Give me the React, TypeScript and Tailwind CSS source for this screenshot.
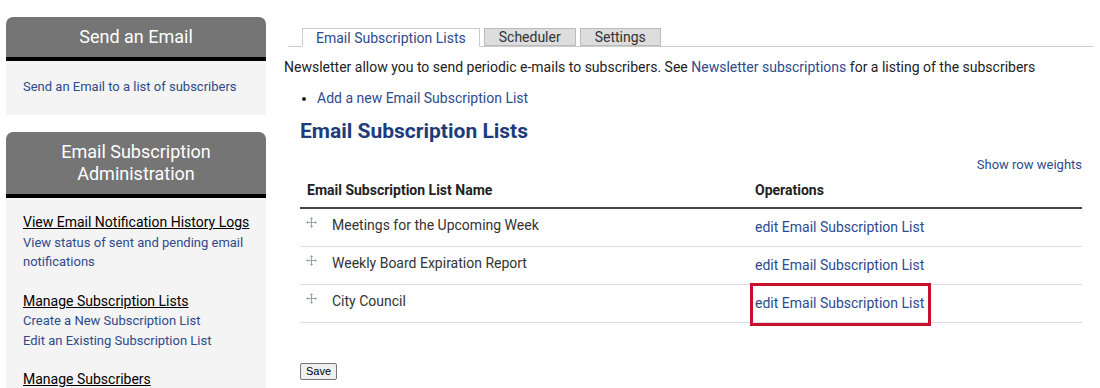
import React from 'react';

const font = { fontFamily: 'Roboto, "Liberation Sans", sans-serif' };

const DragIcon: React.FC = () => (
  <svg width="11" height="11" viewBox="0 0 11 11" className="text-gray-400">
    <path d="M5.5 1v9M1 5.5h9" stroke="currentColor" strokeWidth="1.1" />
    <path d="M5.5 0L3.9 2h3.2zM5.5 11L3.9 9h3.2zM0 5.5L2 3.9v3.2zM11 5.5L9 3.9v3.2z" fill="currentColor" />
  </svg>
);

const SideBox: React.FC<{ title: React.ReactNode; children: React.ReactNode }> = ({ title, children }) => (
  <div className="w-[260px]">
    <div className="bg-[#757575] text-white text-[18px] leading-[22px] text-center rounded-t-[7px] py-[9px] border-b-4 border-black">
      {title}
    </div>
    <div className="bg-[#f4f4f4] pl-[17px] pr-[6px]">{children}</div>
  </div>
);

const rows = ['Meetings for the Upcoming Week', 'Weekly Board Expiration Report', 'City Council'];

export default function App() {
  return (
    <div className="flex w-[1100px] h-[388px] overflow-hidden bg-white text-[14px]" style={font}>
      <aside className="pl-[6px] pt-[17px] flex flex-col gap-[17px]">
        <SideBox title="Send an Email">
          <div className="pt-[16px] pb-[19px] text-[13px] leading-[19px] text-[#2e4a8c]">
            Send an Email to a list of subscribers
          </div>
        </SideBox>
        <SideBox title={<>Email Subscription<br />Administration</>}>
          <div className="pt-[15px] text-[13px] leading-[19.5px]">
            <div className="text-[14px] text-black underline">View Email Notification History Logs</div>
            <div className="text-[#2e4a8c] pr-[14px]">View status of sent and pending email notifications</div>
            <div className="mt-[20px] text-[14px] text-black underline">Manage Subscription Lists</div>
            <div className="text-[#2e4a8c]">Create a New Subscription List</div>
            <div className="text-[#2e4a8c]">Edit an Existing Subscription List</div>
            <div className="mt-[20px] text-[14px] text-black underline">Manage Subscribers</div>
          </div>
        </SideBox>
      </aside>

      <main className="flex-1 pl-[18px] pr-[6px] pt-[28px] text-[#333]">
        <div className="flex items-end border-b border-[#ccc] pl-[14px] ml-[4px] gap-[4px] h-[19px]">
          <div className="bg-white border border-[#ccc] border-b-white -mb-px px-[13px] h-[19px] leading-[18px] text-[#2e4a8c]">
            Email Subscription Lists
          </div>
          <div className="bg-[#ddd] border border-[#bbb] px-[14px] h-[18px] leading-[17px] text-[#333]">Scheduler</div>
          <div className="bg-[#ddd] border border-[#bbb] px-[14px] h-[18px] leading-[17px] text-[#333]">Settings</div>
        </div>

        <p className="mt-[11px] leading-[18px] text-[#222]">
          Newsletter allow you to send periodic e-mails to subscribers. See{' '}
          <span className="text-[#2e4a8c]">Newsletter subscriptions</span> for a listing of the subscribers
        </p>

        <ul className="mt-[13px] ml-[33px] list-disc leading-[18px] marker:text-[#222]">
          <li className="text-[#2e4a8c]">Add a new Email Subscription List</li>
        </ul>

        <div className="pl-[16px] pr-[12px]">
          <h1 className="mt-[12px] text-[21px] leading-[24px] font-bold text-[#1d3c7c]">Email Subscription Lists</h1>

          <div className="mt-[14px] text-right text-[13px] leading-[16px] text-[#2e4a8c]">Show row weights</div>

          <table className="w-full border-collapse">
            <thead>
              <tr className="border-b-2 border-[#444]">
                <th className="text-left font-bold text-[#222] text-[14px] h-[35px] pt-[1px] pl-[7px]">Email Subscription List Name</th>
                <th className="text-left font-bold text-[#222] text-[14px] pt-[1px] pl-[7px] w-[334px]">Operations</th>
              </tr>
            </thead>
            <tbody>
              {rows.map((r, i) => (
                <tr key={r} className="border-b border-[#ddd]">
                  <td className="h-[38px] pl-[6px] align-top pt-[7px]">
                    <div className="flex items-start gap-[15px]">
                      <span className="pt-[1px]"><DragIcon /></span>
                      <span className="text-[#333] leading-[18px]">{r}</span>
                    </div>
                  </td>
                  <td className="pl-[7px] align-top pt-[8px]">
                    <span className="relative inline-block text-[#2e4a8c] leading-[18px]">
                      edit Email Subscription List
                      {i === 2 && (
                        <span className="absolute -left-[5px] -right-[7px] -top-[11px] -bottom-[14px] border-[3px] border-[#c8102e]" />
                      )}
                    </span>
                  </td>
                </tr>
              ))}
            </tbody>
          </table>

          <button
            className="mt-[40px] h-[17px] px-[5px] text-[11px] leading-[13px] bg-[#f0f0f0] border border-[#767676] rounded-[2px] text-black"
            style={{ fontFamily: '"Liberation Sans", Arial, sans-serif' }}
          >
            Save
          </button>
        </div>
      </main>
    </div>
  );
}
